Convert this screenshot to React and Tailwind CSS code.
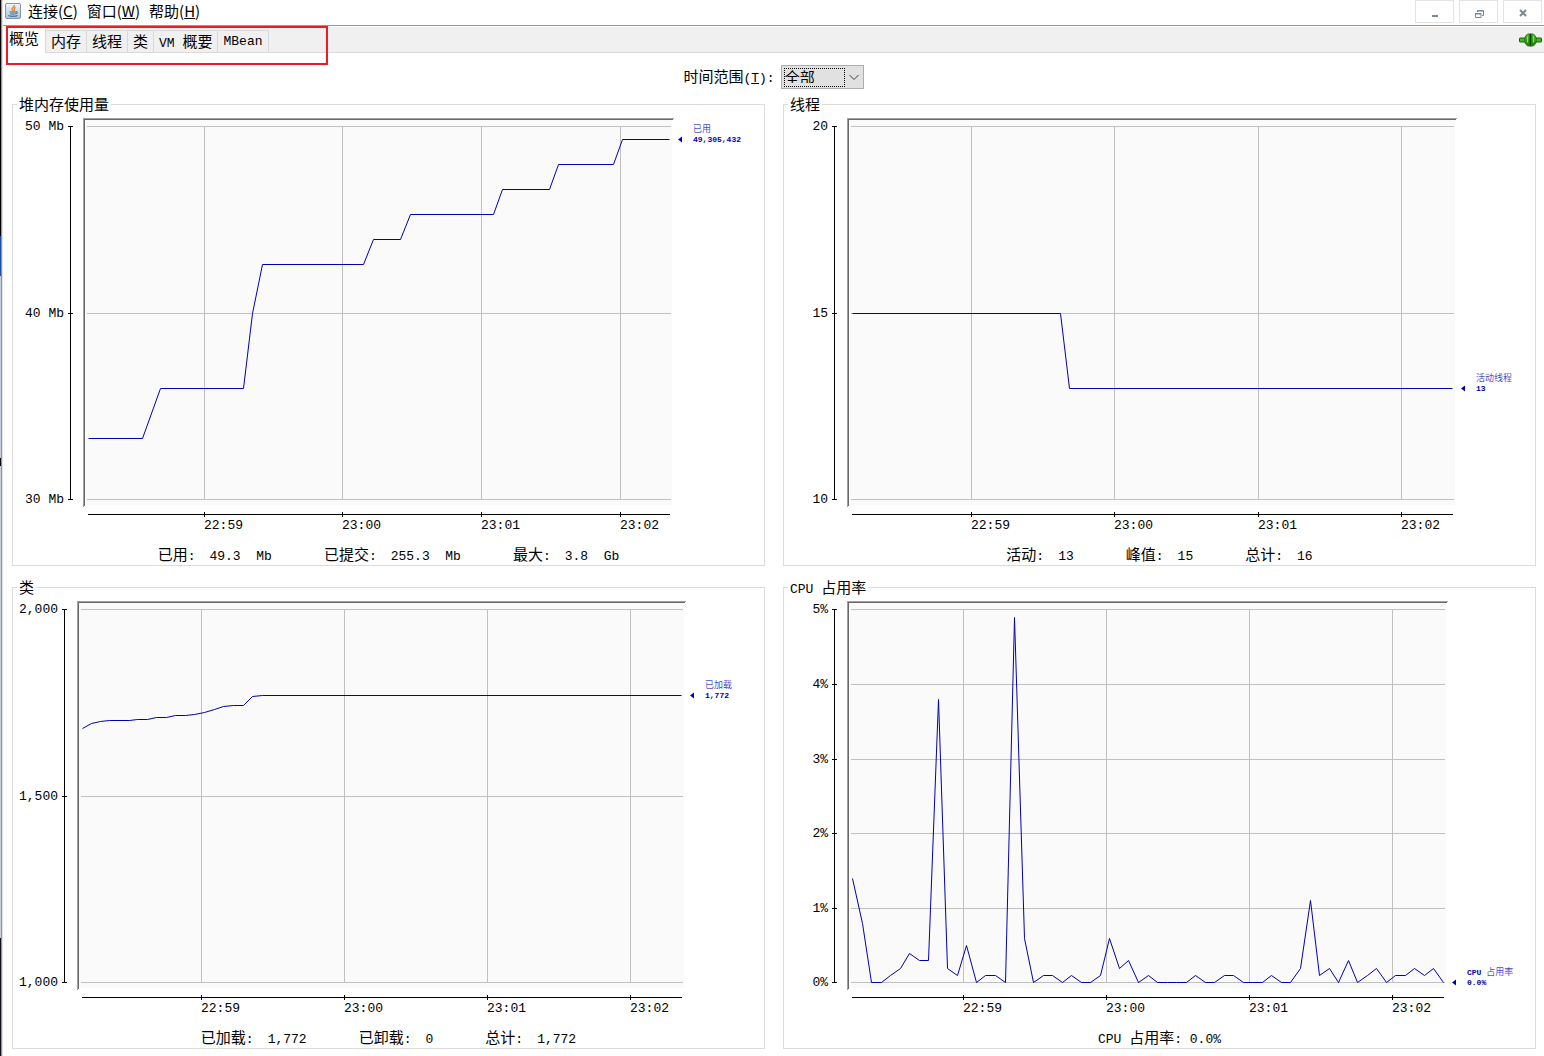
import { useLayoutEffect, useRef, useState } from "react";

const MONO = "font-['Liberation_Mono','Noto_Sans_CJK_SC',monospace]";
const CJK = "font-['Noto_Sans_CJK_SC',sans-serif]";

/* Chinese runs are set one step larger than the monospaced Latin text. */
function Mixed({ children }) {
  return children
    .split(/([\u4e00-\u9fff]+)/)
    .filter(Boolean)
    .map((part, i) =>
      /[\u4e00-\u9fff]/.test(part) ? (
        <span key={i} className="font-['Noto_Sans_CJK_SC',sans-serif] text-[15px]">
          {part}
        </span>
      ) : (
        <span key={i} className="whitespace-pre">{part}</span>
      )
    );
}

const cpu = [
  1.4, 0.8, 0, 0, 0.1, 0.2, 0.4, 0.3, 0.3, 3.8, 0.2, 0.1, 0.5, 0, 0.1, 0.1, 0, 4.9, 0.6, 0, 0.1,
  0.1, 0, 0.1, 0, 0, 0.1, 0.6, 0.2, 0.3, 0, 0.1, 0, 0, 0, 0, 0.1, 0, 0, 0.1, 0.1, 0, 0, 0, 0.1, 0,
  0, 0.2, 1.1, 0.1, 0.2, 0, 0.3, 0, 0.1, 0.2, 0, 0.1, 0.1, 0.2, 0.1, 0.2, 0,
];

const charts = [
  {
    title: "堆内存使用量",
    left: 75,
    right: 95,
    span: 581,
    min: 30,
    max: 50,
    yTicks: [[50, "50 Mb"], [40, "40 Mb"], [30, "30 Mb"]],
    xTicks: [116, 254, 393, 532],
    series: [
      [0, 33.3], [54, 33.3], [72, 35.97], [155, 35.97], [164, 40], [174, 42.62], [275, 42.62],
      [285, 43.96], [312, 43.96], [322, 45.3], [405, 45.3], [414, 46.64], [461, 46.64],
      [470, 47.98], [525, 47.98], [534, 49.305], [581, 49.305],
    ],
    name: ["", "已用"],
    value: "49,305,432",
    stats: [["已用:", "49.3  Mb"], ["已提交:", "255.3  Mb"], ["最大:", "3.8  Gb"]],
  },
  {
    title: "线程",
    left: 68,
    right: 83,
    span: 600,
    min: 10,
    max: 20,
    yTicks: [[20, "20"], [15, "15"], [10, "10"]],
    xTicks: [119, 262, 406, 549],
    series: [[0, 15], [208, 15], [217, 13], [600, 13]],
    name: ["", "活动线程"],
    value: "13",
    stats: [["活动:", "13"], ["峰值:", "15"], ["总计:", "16"]],
  },
  {
    title: "类",
    left: 69,
    right: 83,
    span: 599,
    min: 1000,
    max: 2000,
    yTicks: [[2000, "2,000"], [1500, "1,500"], [1000, "1,000"]],
    xTicks: [119, 262, 405, 548],
    series: [
      [0, 1682], [9, 1696], [18, 1701], [27, 1704], [47, 1704], [55, 1706], [65, 1706], [74, 1711],
      [84, 1711], [93, 1717], [103, 1717], [112, 1720], [122, 1725], [132, 1733], [141, 1741],
      [151, 1744], [161, 1744], [170, 1768], [180, 1772], [599, 1772],
    ],
    name: ["", "已加载"],
    value: "1,772",
    stats: [["已加载:", "1,772"], ["已卸载:", "0"], ["总计:", "1,772"]],
  },
  {
    title: "CPU 占用率",
    left: 68,
    right: 92,
    span: 591,
    min: 0,
    max: 5,
    yTicks: [[5, "5%"], [4, "4%"], [3, "3%"], [2, "2%"], [1, "1%"], [0, "0%"]],
    xTicks: [111, 254, 397, 540],
    series: cpu.map((v, i) => [(i * 591) / 62, v]),
    name: ["CPU ", "占用率"],
    value: "0.0%",
    stats: [["CPU 占用率: 0.0%", ""]],
  },
];

const times = ["22:59", "23:00", "23:01", "23:02"];

function Plot({ chart }) {
  const ref = useRef(null);
  const [size, setSize] = useState({ w: 751, h: 424 });

  useLayoutEffect(() => {
    const measure = () => {
      const box = ref.current.getBoundingClientRect();
      setSize({ w: Math.round(box.width), h: Math.round(box.height) });
    };
    measure();
    const observer = new ResizeObserver(measure);
    observer.observe(ref.current);
    return () => observer.disconnect();
  }, []);

  const top = 14;
  const bottom = size.h - 37;
  const x0 = chart.left;
  const x1 = size.w - chart.right;
  const px = (t) => Math.round(x0 + (t * (x1 - x0)) / chart.span);
  const py = (v) => Math.ceil(top + ((chart.max - v) * (bottom - top)) / (chart.max - chart.min));
  const endY = py(chart.series[chart.series.length - 1][1]);
  const axisX = x0 - 18;
  const axisY = bottom + 15;

  return (
    <svg ref={ref} role="img" aria-label={chart.title} className="block h-0 min-h-[200px] w-full flex-1">
      <rect x={x0 - 5} y={top - 8} width={x1 - x0 + 8} height={bottom - top + 14} fill="#fafafa" />
      <g shapeRendering="crispEdges" fill="none">
        <path d={`M${x0 - 4.5} ${bottom + 8}V${top - 7.5}H${x1 + 5}`} stroke="#a0a0a0" />
        <path d={`M${x0 - 3.5} ${bottom + 7}V${top - 6.5}H${x1 + 4}`} stroke="#696969" />
        {chart.yTicks.map(([v]) => (
          <path key={v} d={`M${x0 - 1} ${py(v) + 0.5}H${x1 + 2}`} stroke="#c0c0c0" />
        ))}
        {chart.xTicks.map((t) => (
          <path key={t} d={`M${px(t) + 0.5} ${top}V${bottom}`} stroke="#c0c0c0" />
        ))}
        <path d={`M${axisX + 0.5} ${top}V${bottom + 1}M${x0} ${axisY + 0.5}H${x1 + 1}`} stroke="#000" />
        {chart.yTicks.map(([v]) => (
          <path key={v} d={`M${axisX - 2} ${py(v) + 0.5}h5`} stroke="#000" />
        ))}
        {chart.xTicks.map((t) => (
          <path key={t} d={`M${px(t) + 0.5} ${axisY - 2}v5`} stroke="#000" />
        ))}
      </g>
      <g className={`${MONO} text-[13px]`} fill="#000">
        {chart.yTicks.map(([v, label]) => (
          <text key={v} x={x0 - 24} y={py(v) + 4} textAnchor="end">{label}</text>
        ))}
        {chart.xTicks.map((t, i) => (
          <text key={t} x={px(t)} y={axisY + 15}>{times[i]}</text>
        ))}
      </g>
      <polyline
        points={chart.series.map(([t, v]) => `${px(t) + 0.5},${py(v) + 0.5}`).join(" ")}
        fill="none"
        stroke="#0000b4"
      />
      <g className={`${MONO} text-[8px]`} fill="#0000b4">
        <path d={`M${x1 + 9} ${endY + 0.5}l4 -3v6z`} />
        <text x={x1 + 24} y={endY - 7} className="whitespace-pre">
          <tspan className="font-bold">{chart.name[0]}</tspan>
          <tspan className="font-['Noto_Sans_CJK_SC',sans-serif] text-[9px]" fillOpacity="0.75">{chart.name[1]}</tspan>
        </text>
        <text x={x1 + 24} y={endY + 3} className="font-bold">{chart.value}</text>
      </g>
    </svg>
  );
}

function Panel({ chart }) {
  return (
    <fieldset className="flex min-w-0 flex-col border border-[#dcdcdc]">
      <legend className="ml-1 h-4 px-0.5 leading-4"><Mixed>{chart.title}</Mixed></legend>
      <Plot chart={chart} />
      <dl className="flex justify-center gap-[52px] pt-2 pb-px leading-5">
        {chart.stats.map(([label, value]) => (
          <div key={label} className="flex h-5 items-baseline gap-3.5">
            <dt><Mixed>{label}</Mixed></dt>
            {value && <dd className="whitespace-pre">{value}</dd>}
          </div>
        ))}
      </dl>
    </fieldset>
  );
}

function JavaIcon() {
  return (
    <svg width="16" height="16" viewBox="0 0 16 16" aria-hidden="true">
      <defs>
        <linearGradient id="java-bg" x1="0" y1="0" x2="0" y2="1">
          <stop offset="0" stopColor="#f4f7fa" />
          <stop offset="1" stopColor="#a9c3d8" />
        </linearGradient>
      </defs>
      <rect x="0.5" y="0.5" width="15" height="15" rx="1.5" fill="url(#java-bg)" stroke="#7c98b3" />
      <path d="M9.5 1.8C10 3.8 6.2 4.6 7 6.4c.3.7 1 .9.9 1.8M10.6 4.4C8.6 5.2 9 6 9.3 6.7c.2.5-.1.9-.5 1.3" fill="none" stroke="#ee7a1c" strokeWidth="1.2" />
      <path d="M4.5 9h6.3M10.8 8.8c2-.4 2 1.6-.6 2M5.2 11h4.6M3.3 12.6c1.800 1 7 1 9.200-.2" fill="none" stroke="#3f6c94" strokeWidth="1.1" />
    </svg>
  );
}

function ConnectedIcon() {
  return (
    <svg width="23" height="14" viewBox="0 0 23 14" role="img" aria-label="已连接">
      <defs>
        <linearGradient id="plug" x1="0" y1="0" x2="0" y2="1">
          <stop offset="0" stopColor="#55c02c" />
          <stop offset="1" stopColor="#1d7a0c" />
        </linearGradient>
      </defs>
      <rect x="0.5" y="5" width="22" height="4" rx="0.5" fill="#4db423" stroke="#17600a" />
      <path d="M10.500 .8C7.500 1 5.500 3.500 5.500 7s2 6 5 6.200zM12.500 .8c3 .2 5 2.700 5 6.200s-2 6-5 6.200z" fill="url(#plug)" stroke="#2a7a18" />
      <path d="M11.500 .5v13" stroke="#0d4505" />
      <path d="M8.500 3.500v6M14.500 3.500v6" stroke="#8be05e" />
    </svg>
  );
}

const windowButtons = [
  ["最小化", <path key="m" d="M4 8h6v2H4z" fill="#7a8794" />],
  [
    "还原",
    <path key="r" d="M5.500 5V3.500h6v5H10M3 6.500h6v4H3.500v-4M5 4h7M3 7h6" fill="none" stroke="#7a8794" />,
  ],
  ["关闭", <path key="c" d="M4 3l6 6M10 3l-6 6" fill="none" stroke="#7a8794" strokeWidth="2" />],
];

const menus = [["连接", "C"], ["窗口", "W"], ["帮助", "H"]];
const tabs = ["概览", "内存", "线程", "类", "VM 概要", "MBean"];

export default function App() {
  return (
    <div className={`flex min-h-screen bg-white text-[13px] text-black ${MONO}`}>
      <div
        aria-hidden="true"
        className="w-0.5 shrink-0 border-r border-[#b98a66] bg-[linear-gradient(to_bottom,#000_0_236px,#1d4fa8_236px_276px,#c5ccdc_276px_458px,#000_458px_466px,#c9cedb_466px_938px,#10101c_938px)]"
      />
      <div className="flex min-w-0 flex-1 flex-col border-l border-[#e3e3e3]">
        <header className="flex h-[26px] justify-between border-b border-[#969b9f]">
          <nav className={`flex items-center pb-[3px] pl-0.5 text-[15px] ${CJK}`}>
            <JavaIcon />
            <div className="ml-[7px] flex gap-[9px]">
              {menus.map(([name, key]) => (
                <button key={key} type="button" className="leading-5">
                  {name}(<span className="underline">{key}</span>)
                </button>
              ))}
            </div>
          </nav>
          <div className="flex gap-[5px] pr-0.5">
            {windowButtons.map(([name, icon]) => (
              <button
                key={name}
                type="button"
                aria-label={name}
                className="flex h-[23px] w-[39px] items-center justify-center border border-[#e3e3e3]"
              >
                <svg width="14" height="14" viewBox="0 0 14 14" className="mt-1">{icon}</svg>
              </button>
            ))}
          </div>
        </header>

        <div className="relative mt-px flex h-[26px] items-stretch justify-between bg-[#f0f0f0]">
          <div role="tablist" className="flex">
            {tabs.map((tab, i) => (
              <button
                key={tab}
                type="button"
                role="tab"
                aria-selected={i === 0}
                className={
                  i === 0
                    ? "border-r border-[#d9d9d9] bg-white px-1.5 pb-0.5 leading-[20px]"
                    : "mt-[3px] border-t border-r border-b border-[#d9d9d9] px-[5px] leading-[20px]"
                }
              >
                <Mixed>{tab}</Mixed>
              </button>
            ))}
          </div>
          <div className="flex flex-1 items-center justify-end border-b border-[#d9d9d9] pt-px pr-0.5">
            <ConnectedIcon />
          </div>
          <div
            aria-hidden="true"
            className="pointer-events-none absolute -top-px left-[3px] h-[39px] w-[322px] border-2 border-[#ed1c24]"
          />
        </div>

        <main className="flex flex-1 flex-col">
          <div className="flex items-center justify-center pt-3 pb-[7px]">
            <label htmlFor="range" className="pr-1.5">
              <Mixed>时间范围</Mixed>(<span className="underline">T</span>):
            </label>
            <div className="flex h-6 w-[83px] items-center border border-[#adadad] bg-[#e1e1e1] pl-0.5">
              <select
                id="range"
                defaultValue="全部"
                className={`h-[19px] w-[61px] appearance-none border border-dotted border-black bg-transparent pb-[3px] text-[15px] leading-none outline-none ${CJK}`}
              >
                <option>全部</option>
              </select>
              <svg width="18" height="10" viewBox="0 0 18 10" aria-hidden="true">
                <path d="M4.500 3l4.500 4.500L13.500 3" fill="none" stroke="#404040" />
              </svg>
            </div>
          </div>
          <div className="grid flex-1 grid-cols-2 grid-rows-2 gap-x-[18px] gap-y-[13px] pr-2 pb-[7px] pl-[9px]">
            {charts.map((chart) => (
              <Panel key={chart.title} chart={chart} />
            ))}
          </div>
        </main>
      </div>
    </div>
  );
}
